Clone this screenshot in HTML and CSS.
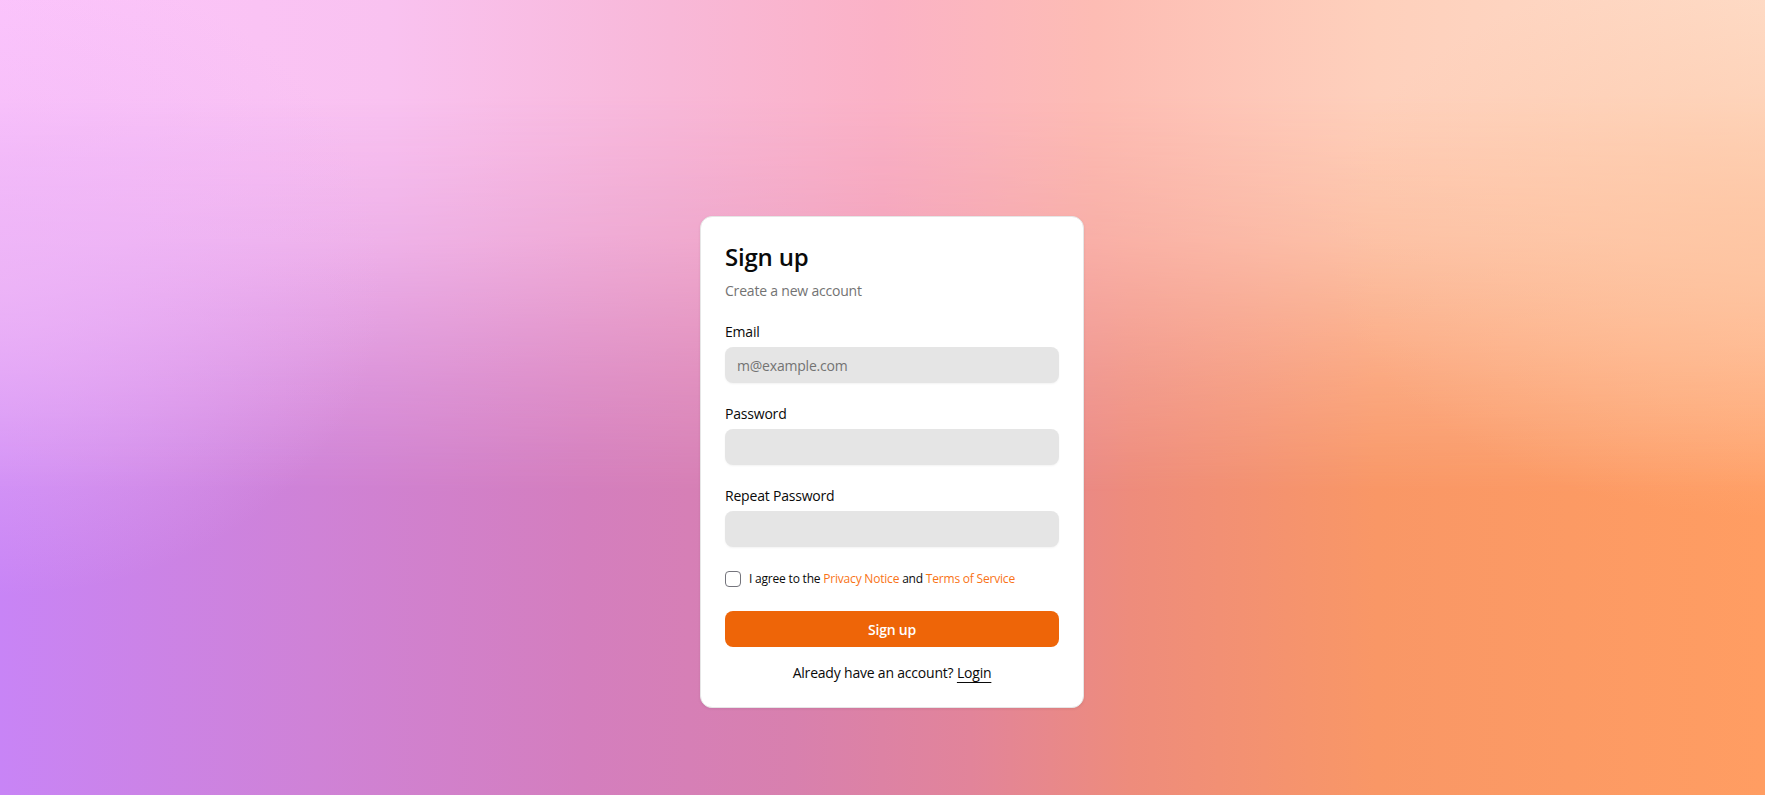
FILE: index.html
```html
<!DOCTYPE html>
<html lang="en">
<head>
<meta charset="utf-8">
<title>Sign up</title>
<link rel="stylesheet" href="styles.css">
</head>
<body>
<div class="backdrop"></div>
<main class="page">
  <div class="card">
    <div class="card-header">
      <h1 class="card-title">Sign up</h1>
      <p class="card-desc">Create a new account</p>
    </div>
    <form class="form">
      <div class="field">
        <label class="label" for="email">Email</label>
        <input class="input" id="email" type="email" placeholder="m@example.com">
      </div>
      <div class="field">
        <label class="label" for="pw">Password</label>
        <input class="input" id="pw" type="password">
      </div>
      <div class="field">
        <label class="label" for="pw2">Repeat Password</label>
        <input class="input" id="pw2" type="password">
      </div>
      <div class="agree">
        <span class="checkbox"></span>
        <span class="agree-text">I agree to the <a class="link" href="#">Privacy Notice</a> and <a class="link" href="#">Terms of Service</a></span>
      </div>
      <button class="btn" type="button">Sign up</button>
      <p class="footer">Already have an account? <a class="login" href="#">Login</a></p>
    </form>
  </div>
</main>
</body>
</html>
```

FILE: styles.css
```css
* { box-sizing: border-box; }
html, body { margin: 0; height: 100%; }
body {
  font-family: "Open Sans", "Noto Sans", sans-serif;
  letter-spacing: -0.2px;
  color: #0a0a0a;
  overflow: hidden;
  position: relative;
  background: linear-gradient(90deg, #c884f6 0%, #cf82d6 18%, #d47ebe 33%, #d880ae 45%, #e2849a 55%, #ee8c7c 64%, #f99766 78%, #ff9d62 100%);
}
.backdrop {
  position: absolute;
  inset: 0;
  pointer-events: none;
}
.backdrop::before {
  content: "";
  position: absolute;
  inset: 0;
  background: linear-gradient(90deg, #fcc5fc 0%, #f9c2f0 22%, #f8b8d8 38%, #fbb2c6 50%, #fdbcb4 62%, #fed0bc 78%, #fedcc8 100%);
  -webkit-mask-image: linear-gradient(180deg, #000 0%, #000 12%, rgba(0,0,0,0.75) 30%, rgba(0,0,0,0.3) 48%, rgba(0,0,0,0) 62%);
  mask-image: linear-gradient(180deg, #000 0%, #000 12%, rgba(0,0,0,0.75) 30%, rgba(0,0,0,0.3) 48%, rgba(0,0,0,0) 62%);
}
.backdrop::after {
  content: "";
  position: absolute;
  inset: 0;
  background:
    radial-gradient(ellipse 22% 40% at 0% 35%, rgba(238,182,246,0.75) 0%, rgba(238,182,246,0) 100%),
    radial-gradient(ellipse 25% 35% at 100% 30%, rgba(254,196,160,0.7) 0%, rgba(254,196,160,0) 100%);
}
.page {
  position: relative;
  display: flex;
  justify-content: center;
  padding-top: 216px;
  padding-left: 19px;
}
.card {
  width: 384px;
  background: #fff;
  border: 1px solid #e6e6e6;
  border-radius: 12px;
  padding: 24px;
  box-shadow: 0 1px 3px rgba(0,0,0,0.08);
}
.card-title {
  margin: 0;
  font-size: 24px;
  line-height: 32px;
  font-weight: 600;
}
.card-desc {
  margin: 8px 0 0;
  font-size: 14px;
  line-height: 20px;
  color: #737373;
}
.form {
  margin-top: 24px;
  display: flex;
  flex-direction: column;
  gap: 24px;
}
.field {
  display: flex;
  flex-direction: column;
  gap: 8px;
}
.label {
  font-size: 14px;
  line-height: 14px;
  font-weight: 500;
}
.input {
  height: 36px;
  width: 100%;
  border: none;
  border-radius: 8px;
  background: #e5e5e5;
  padding: 0 12px;
  font-family: inherit;
  font-size: 14px;
  letter-spacing: -0.2px;
  color: #0a0a0a;
  box-shadow: 0 1px 2px rgba(0,0,0,0.05);
  outline: none;
}
.input::placeholder { color: #737373; }
.agree {
  display: flex;
  align-items: center;
  gap: 8px;
  height: 16px;
}
.checkbox {
  width: 16px;
  height: 16px;
  flex: none;
  border: 1px solid #74747c;
  border-radius: 4px;
  background: #fff;
}
.agree-text {
  font-size: 12px;
  line-height: 16px;
}
.link {
  color: #f97316;
  text-decoration: none;
}
.btn {
  height: 36px;
  width: 100%;
  border: none;
  border-radius: 8px;
  background: #ee6508;
  color: #fff;
  font-family: inherit;
  font-size: 14px;
  font-weight: 600;
  letter-spacing: -0.2px;
}
.footer {
  margin: -8px 0 0;
  text-align: center;
  font-size: 14px;
  line-height: 20px;
}
.login {
  color: #0a0a0a;
  text-decoration: underline;
  text-underline-offset: 4px;
}
```
